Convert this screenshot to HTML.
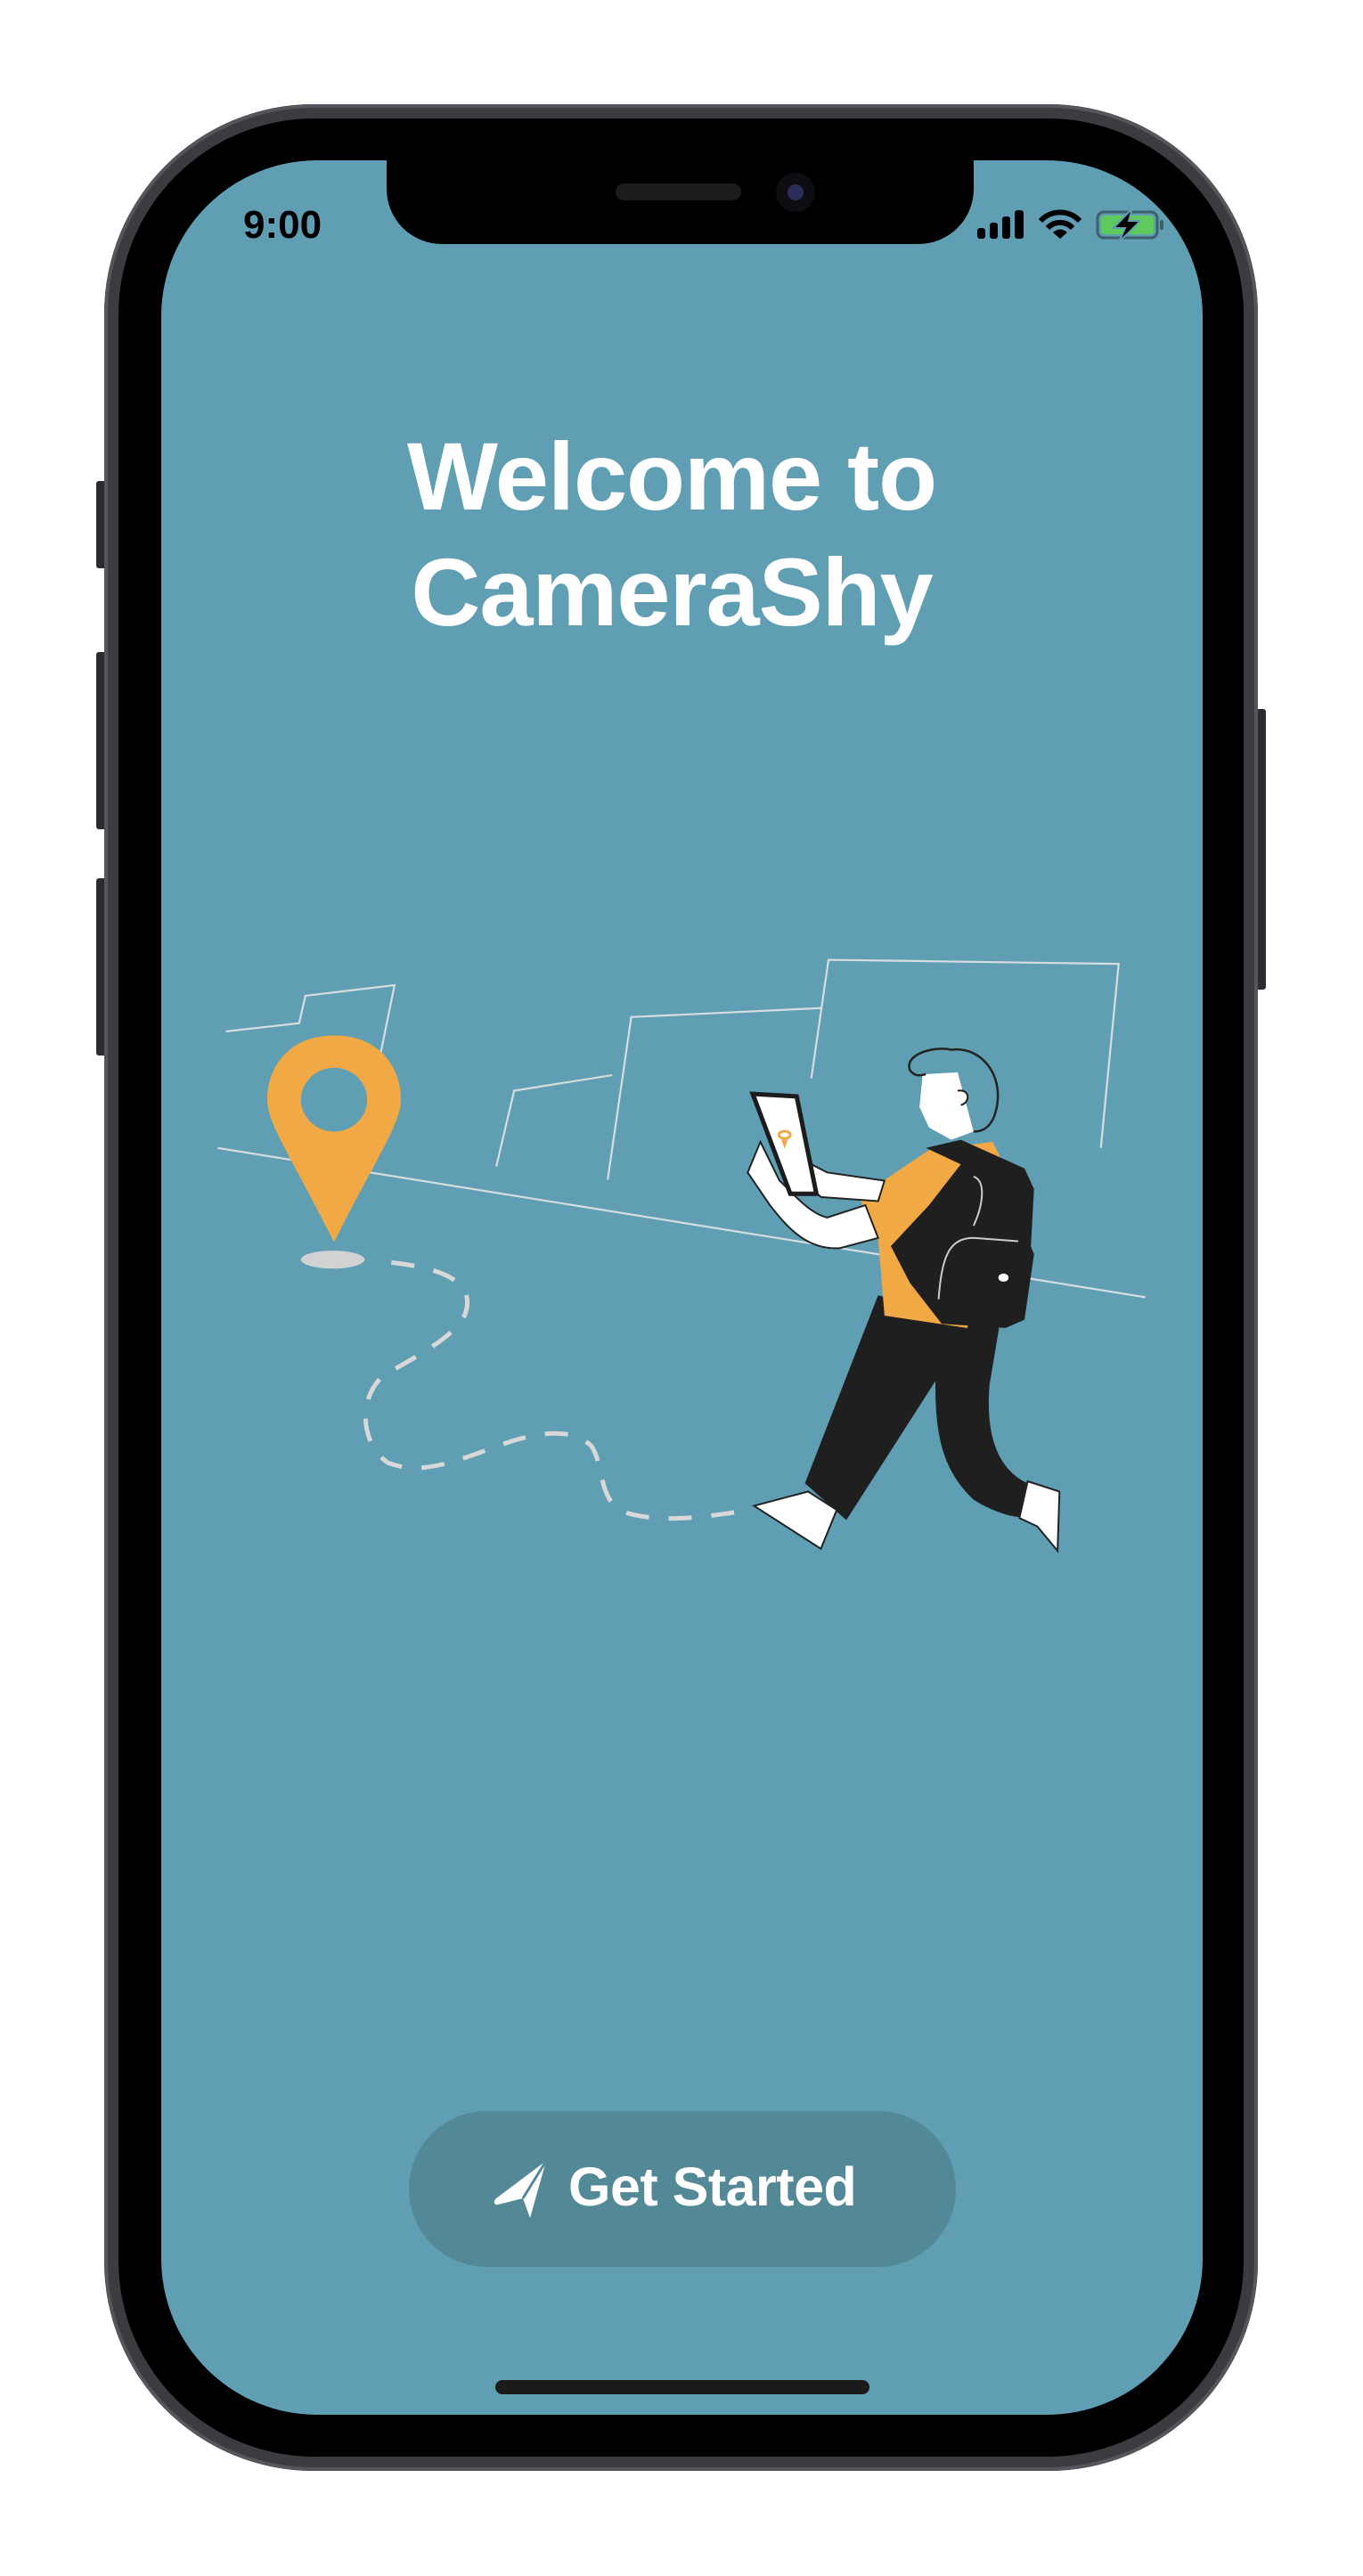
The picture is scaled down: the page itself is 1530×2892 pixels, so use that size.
<!DOCTYPE html>
<html><head><meta charset="utf-8">
<style>
html,body{margin:0;padding:0;background:#fff;}
body{width:1530px;height:2892px;position:relative;overflow:hidden;font-family:"Liberation Sans",sans-serif;}
.abs{position:absolute;}
.frame{left:117px;top:117px;width:1295px;height:2657px;border-radius:235px;background:#3b3b40;box-shadow:inset 0 0 0 4px #55555b;}
.bezel{left:133px;top:133px;width:1263px;height:2625px;border-radius:220px;background:#000;}
.screen{left:181px;top:180px;width:1169px;height:2531px;border-radius:175px;background:#5f9eb3;overflow:hidden;}
.btn{background:#2c2c30;border-radius:3px;}
</style></head><body>
<div class="abs btn" style="left:108px;top:540px;width:12px;height:98px"></div>
<div class="abs btn" style="left:108px;top:732px;width:12px;height:199px"></div>
<div class="abs btn" style="left:108px;top:986px;width:12px;height:199px"></div>
<div class="abs btn" style="left:1408px;top:796px;width:13px;height:315px"></div>
<div class="abs frame"></div>
<div class="abs bezel"></div>
<div class="abs screen"></div>
<div class="abs" style="left:434px;top:170px;width:659px;height:104px;background:#000;border-radius:0 0 62px 62px"></div>
<div class="abs" style="left:691px;top:206px;width:141px;height:19px;background:#1c1c1e;border-radius:10px"></div>
<div class="abs" style="left:871px;top:194px;width:44px;height:44px;background:#0d0d12;border-radius:50%"></div>
<div class="abs" style="left:884px;top:207px;width:18px;height:18px;background:#2a2c5a;border-radius:50%"></div>
<div class="abs" style="left:273px;top:228px;font-size:44px;font-weight:bold;color:#000">9:00</div>
<svg class="abs" style="left:1095px;top:234px" width="215" height="38" viewBox="0 0 215 38">
<rect x="2" y="22" width="9" height="12" rx="3" fill="#000"/>
<rect x="16" y="16" width="9" height="18" rx="3" fill="#000"/>
<rect x="30" y="9" width="9" height="25" rx="3" fill="#000"/>
<rect x="44" y="2" width="10" height="32" rx="3" fill="#000"/>
<path d="M73 14 A30 30 0 0 1 117 14" stroke="#000" stroke-width="6" fill="none"/>
<path d="M81 22 A19 19 0 0 1 109 22" stroke="#000" stroke-width="6" fill="none"/>
<path d="M95 34 L87 27 A11 11 0 0 1 103 27 Z" fill="#000"/>
<rect x="137" y="4" width="67" height="29" rx="7" fill="none" stroke="#3f5f68" stroke-width="3"/>
<rect x="141" y="8" width="59" height="21" rx="4" fill="#5ec95c"/>
<rect x="207" y="13" width="4" height="11" rx="2" fill="#3f5f68"/>
<path d="M176 0 L155 22 L168 22 L161 38 L185 14 L172 14 Z" fill="#000" stroke="#5f9eb3" stroke-width="2"/>
</svg>
<div class="abs" style="left:181px;width:1146px;top:470px;text-align:center;color:#fff;font-weight:bold;font-size:108px;line-height:130px;letter-spacing:-1px">Welcome to<br>CameraShy</div>
<svg class="abs" style="left:200px;top:1050px" width="1120" height="720" viewBox="0 0 1568 1568" preserveAspectRatio="none">
<g stroke="#d6dde0" stroke-width="2.2" fill="none">
<polyline vector-effect="non-scaling-stroke" points="62,520 1520,885"/>
<polyline vector-effect="non-scaling-stroke" points="75,235 190,215 200,148 340,122 318,290"/>
<polyline vector-effect="non-scaling-stroke" points="500,565 528,380 682,342"/>
<polyline vector-effect="non-scaling-stroke" points="675,598 712,200 1010,178"/>
<polyline vector-effect="non-scaling-stroke" points="995,350 1022,60 1478,70 1450,520"/>
</g>
<path d="M335,800 C420,815 470,850 450,930 C430,990 360,1040 320,1080 C280,1140 290,1250 330,1290 C380,1320 430,1290 500,1250 C560,1215 620,1200 650,1250 C670,1300 660,1380 700,1410 C760,1440 830,1420 880,1410" fill="none" stroke="#d8d8d8" stroke-width="5" stroke-dasharray="26 22" vector-effect="non-scaling-stroke"/>
<ellipse cx="243" cy="793" rx="50" ry="22" fill="#d0d2d3"/>
<path d="M245,245 C170,245 140,330 140,400 C140,460 170,520 245,750 C320,520 350,460 350,400 C350,330 320,245 245,245 Z" fill="#f0a945"/>
<ellipse cx="245" cy="402" rx="52" ry="78" fill="#5f9eb3"/>
<path d="M1100,880 L985,1340 L1050,1430 L1190,1090 C1190,1200 1195,1300 1250,1380 C1280,1410 1320,1430 1335,1420 L1335,1340 C1280,1300 1270,1200 1275,1100 L1290,960 Z" fill="#201f20"/>
<path d="M905,1395 L990,1360 L1035,1405 L1010,1500 Z" fill="#fff" stroke="#222" stroke-width="2" vector-effect="non-scaling-stroke"/>
<path d="M1335,1335 L1385,1360 L1382,1505 L1350,1445 L1322,1425 Z" fill="#fff" stroke="#222" stroke-width="2" vector-effect="non-scaling-stroke"/>
<path d="M1070,640 L1180,525 L1280,505 L1310,600 L1240,960 L1110,930 L1100,740 Z" fill="#f0a945"/>
<path d="M1175,520 L1230,500 L1330,570 L1345,620 L1340,760 L1345,780 L1330,940 L1300,960 L1200,950 L1150,850 L1120,760 L1180,660 L1230,560 Z" fill="#201f20"/>
<path d="M1250,590 C1270,600 1265,660 1250,710" stroke="#ccc" stroke-width="2" fill="none" vector-effect="non-scaling-stroke"/>
<path d="M1195,890 C1200,790 1210,740 1250,740 L1320,748" stroke="#ccc" stroke-width="2" fill="none" vector-effect="non-scaling-stroke"/>
<ellipse cx="1297" cy="837" rx="8" ry="10" fill="#fff"/>
<path d="M1110,600 L1020,580 L995,560 L990,610 L1010,640 L1100,650 Z" fill="#fff" stroke="#222" stroke-width="2" vector-effect="non-scaling-stroke"/>
<path d="M1080,660 L1020,690 C990,680 960,620 945,600 L915,505 L895,580 L930,660 C960,720 990,770 1040,765 L1100,740 Z" fill="#fff" stroke="#222" stroke-width="2" vector-effect="non-scaling-stroke"/>
<path d="M903,388 L972,394 L1003,632 L962,632 Z" fill="#fff" stroke="#1c1c1c" stroke-width="5" vector-effect="non-scaling-stroke"/>
<circle cx="953" cy="488" r="9" fill="none" stroke="#f0a945" stroke-width="3" vector-effect="non-scaling-stroke"/>
<path d="M948,500 L953,522 L958,500 Z" fill="#f0a945"/>
<path d="M1170,340 L1225,335 L1250,480 L1215,500 L1180,470 L1165,420 Z" fill="#fff"/>
<path d="M1150,330 C1140,290 1190,270 1215,280 C1260,270 1300,340 1285,430 C1280,460 1270,480 1250,480 M1150,330 C1160,350 1170,340 1175,340" fill="none" stroke="#222" stroke-width="2.5" vector-effect="non-scaling-stroke"/>
<path d="M1225,380 C1245,375 1245,410 1230,415" fill="#fff" stroke="#222" stroke-width="2" vector-effect="non-scaling-stroke"/>
</svg>
<div class="abs" style="left:459px;top:2370px;width:614px;height:175px;border-radius:88px;background:#538897"></div>
<svg class="abs" style="left:549px;top:2424px" width="70" height="68" viewBox="0 0 70 68">
<path d="M64 2 L8 44 C4 48 6 52 10 51 L38 44 L46 66 Z" fill="#fff"/>
<path d="M64 2 L38 44" stroke="#538897" stroke-width="3"/>
</svg>
<div class="abs" style="left:638px;top:2420px;font-size:61px;font-weight:bold;color:#fff;letter-spacing:-0.5px">Get Started</div>
<div class="abs" style="left:556px;top:2672px;width:420px;height:16px;border-radius:8px;background:#1b1b1b"></div>
</body></html>
